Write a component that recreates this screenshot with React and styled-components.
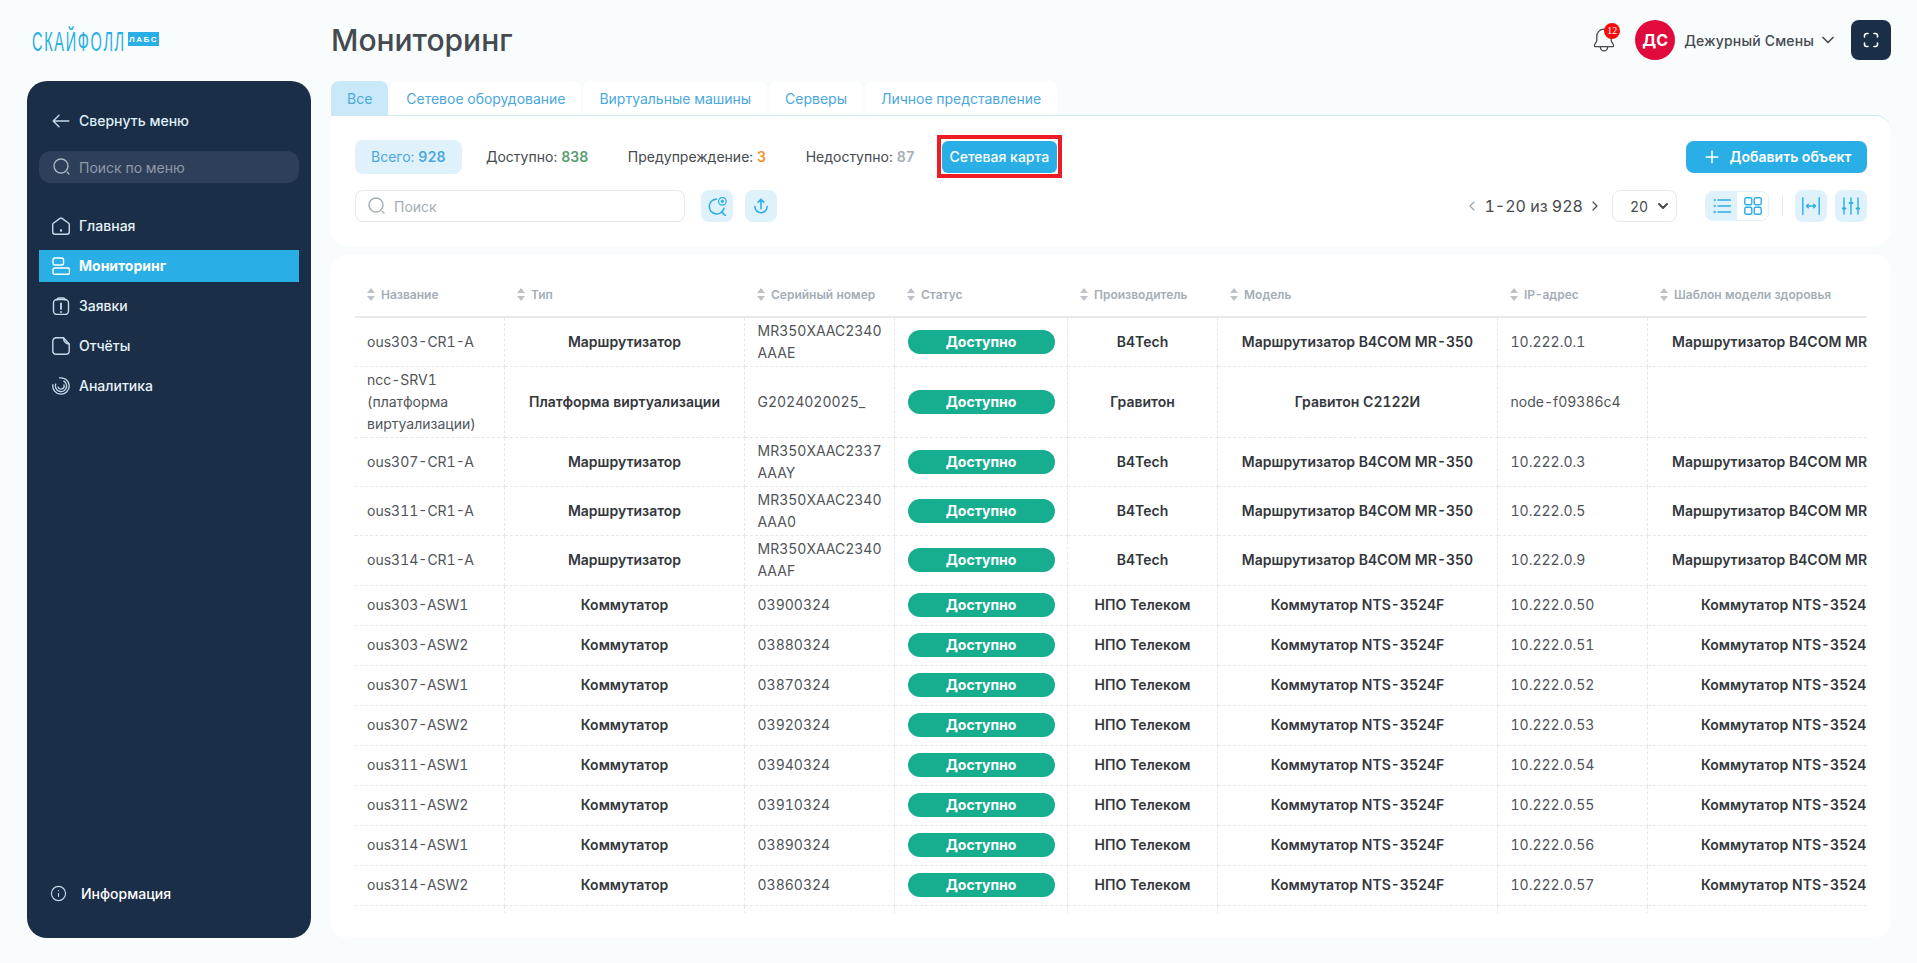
import React from "react";
import styled, { createGlobalStyle } from "styled-components";
import { Info, Plus, ChevronDown, ChevronLeft, ChevronRight } from "lucide-react";

const GlobalStyle = createGlobalStyle`
  html, body { margin: 0; padding: 0; background: #f8fcfd; }
  * { box-sizing: border-box; }
  body {
    font-family: Inter, "Noto Sans", sans-serif;
    font-feature-settings: "tnum";
    overflow: hidden;
  }
`;

const Page = styled.div`
  width: 1917px;
  height: 963px;
  display: grid;
  grid-template-columns: 284px 1560px;
  column-gap: 20px;
  padding: 0 26px 25px 27px;
`;
const Side = styled.div`
  display: flex;
  flex-direction: column;
`;
const LogoRow = styled.div`
  height: 81px;
  padding: 32px 0 0 5px;
  display: flex;
  align-items: flex-start;
  gap: 2px;
`;
const LogoText = styled.span`
  font-family: "Liberation Sans", sans-serif;
  font-size: 28px;
  line-height: 20px;
  color: #29aee6;
  letter-spacing: 3.2px;
  display: inline-block;
  transform: scaleX(0.52);
  transform-origin: left top;
  width: 94px;
  white-space: nowrap;
`;
const LogoBadge = styled.span`
  background: #29aee6;
  color: #fff;
  font-family: "Liberation Sans", sans-serif;
  font-size: 8px;
  font-weight: 700;
  letter-spacing: 1.5px;
  height: 14px;
  width: 31px;
  display: flex;
  align-items: center;
  justify-content: center;
`;
const Sidebar = styled.nav`
  height: 857px;
  background: #1b2e47;
  border-radius: 20px;
  padding: 24px 12px 0;
  display: flex;
  flex-direction: column;
`;
const Collapse = styled.div`
  height: 32px;
  padding: 0 0 1px 13px;
  display: flex;
  align-items: center;
  gap: 9px;
  color: #dfeef7;
  font-size: 14px;
  font-weight: 500;
  svg { color: #c4dcea; }
`;
const MenuSearch = styled.div`
  margin-top: 14px;
  height: 32px;
  background: #2e4059;
  border-radius: 12px;
  padding-left: 14px;
  display: flex;
  align-items: center;
  gap: 8px;
  color: #8e9aa8;
  font-size: 14px;
  svg { color: #a9b5c2; }
`;
const MenuList = styled.div`
  margin-top: 27px;
  display: flex;
  flex-direction: column;
  gap: 8px;
`;
const MenuItem = styled.div`
  height: 32px;
  padding: 0 0 1px 13px;
  display: flex;
  align-items: center;
  gap: 9px;
  font-size: 14px;
  font-weight: ${(p) => (p.$active ? 700 : 500)};
  color: ${(p) => (p.$active ? "#fff" : "#e6f2f9")};
  background: ${(p) => (p.$active ? "#29aee6" : "transparent")};
  svg { color: ${(p) => (p.$active ? "#fff" : "#c4dcea")}; flex: none; }
`;
const InfoRow = styled.div`
  margin-top: auto;
  margin-bottom: 33px;
  height: 24px;
  padding-left: 11px;
  display: flex;
  align-items: center;
  gap: 14px;
  color: #fff;
  font-size: 14px;
  font-weight: 500;
  svg { color: #c4dcea; }
`;

const Main = styled.div`
  display: flex;
  flex-direction: column;
  min-width: 0;
`;
const TopBar = styled.header`
  height: 81px;
  padding-top: 20px;
  display: flex;
  align-items: flex-start;
  justify-content: space-between;
`;
const Title = styled.h1`
  margin: 0;
  font-size: 30px;
  line-height: 40px;
  font-weight: 500;
  color: #454a50;
`;
const UserBox = styled.div`
  display: flex;
  align-items: center;
`;
const BellWrap = styled.div`
  position: relative;
  width: 24px;
  height: 24px;
  margin-right: 19px;
  color: #454a50;
`;
const Badge = styled.span`
  position: absolute;
  top: -5px;
  right: -4px;
  width: 16px;
  height: 16px;
  border-radius: 50%;
  background: #f50d0d;
  color: #fff;
  font-family: "Liberation Serif", serif;
  font-size: 10px;
  line-height: 16px;
  text-align: center;
`;
const Avatar = styled.div`
  width: 40px;
  height: 40px;
  border-radius: 50%;
  background: #e00a3c;
  color: #fff;
  font-size: 16px;
  font-weight: 700;
  display: flex;
  align-items: center;
  justify-content: center;
`;
const UserName = styled.span`
  margin-left: 9px;
  font-size: 14px;
  font-weight: 500;
  letter-spacing: 0.15px;
  color: #454a50;
`;
const Chevron = styled.span`
  margin: 0 13px 0 4px;
  display: flex;
  color: #454a50;
`;
const FullBtn = styled.button`
  width: 40px;
  height: 40px;
  border: none;
  border-radius: 8px;
  background: #1b2e47;
  color: #fff;
  display: flex;
  align-items: center;
  justify-content: center;
  padding: 0;
`;

const Tabs = styled.div`
  height: 34px;
  display: flex;
  gap: 2px;
`;
const Tab = styled.div`
  padding: 0 16px;
  display: flex;
  align-items: center;
  font-size: 14px;
  letter-spacing: -0.01px;
  color: #4aa8dc;
  background: ${(p) => (p.$active ? "#c9e9f9" : "#fff")};
  border-radius: 8px 8px 0 0;
`;
const FilterPanel = styled.section`
  height: 131px;
  background: #fff;
  border-top: 1px solid #cde8f6;
  border-radius: 0 16px 16px 16px;
  padding: 24px 24px 0;
  display: flex;
  flex-direction: column;
  gap: 16px;
`;
const PanelRow = styled.div`
  display: flex;
  align-items: center;
  justify-content: space-between;
`;
const Group = styled.div`
  display: flex;
  align-items: center;
`;
const Stat = styled.div`
  height: 34px;
  padding: 0 15.5px 1px 24px;
  display: flex;
  align-items: center;
  gap: 4px;
  font-size: 14px;
  color: #454a50;
`;
const ActiveStat = styled(Stat)`
  width: 107px;
  padding: 0 0 1px 16px;
  border-radius: 8px;
  color: #4aa8dc;
  background: #dff1fa;
`;
const StatValue = styled.b`
  font-weight: 600;
  color: ${(p) => p.$color};
`;
const MapButton = styled.button`
  position: relative;
  height: 32px;
  width: 115px;
  margin-left: 11.5px;
  border: none;
  border-radius: 6px;
  background: #29aee6;
  color: #fff;
  font: 500 14px Inter, sans-serif;
  padding: 0 0 1px;
  &::after {
    content: "";
    position: absolute;
    inset: -6px -5px -5px;
    border: 4px solid #ed1c24;
  }
`;
const AddButton = styled.button`
  height: 32px;
  width: 181px;
  border: none;
  border-radius: 8px;
  background: #29aee6;
  color: #fff;
  font: 600 14px Inter, sans-serif;
  display: flex;
  align-items: center;
  justify-content: center;
  gap: 8px;
  padding: 0 0 1px;
`;
const SearchField = styled.div`
  width: 330px;
  height: 32px;
  border: 1px solid #e3e8ec;
  border-radius: 8px;
  padding-left: 12px;
  display: flex;
  align-items: center;
  gap: 8px;
  font-size: 14px;
  color: #a5adb5;
`;
const IconBtn = styled.div`
  width: 32px;
  height: 32px;
  border-radius: 8px;
  background: #dff1fa;
  color: #29aee6;
  display: flex;
  align-items: center;
  justify-content: center;
  margin-left: ${(p) => p.$gap}px;
`;
const Pager = styled.div`
  display: flex;
  align-items: center;
  gap: 4px;
  font-size: 16px;
  color: #454a50;
`;
const PageSelect = styled.div`
  width: 65px;
  height: 32px;
  margin-left: 9px;
  border: 1px solid #e6e9ec;
  border-radius: 8px;
  padding: 0 5px 0 17px;
  display: flex;
  align-items: center;
  justify-content: space-between;
  font-size: 14px;
  color: #454a50;
`;
const Toggle = styled.div`
  display: flex;
  width: 64px;
  height: 30px;
  margin-left: 28px;
  border: 1px solid #dff1fa;
  border-radius: 8px;
  overflow: hidden;
`;
const ToggleCell = styled.div`
  flex: 1;
  display: flex;
  align-items: center;
  justify-content: center;
  color: #29aee6;
  background: ${(p) => (p.$active ? "#dff1fa" : "#fff")};
`;
const Divider = styled.div`
  width: 1px;
  height: 20px;
  margin-left: 13px;
  background: #e3e8ec;
`;

const TablePanel = styled.section`
  margin-top: 9px;
  height: 683px;
  background: #fff;
  border-radius: 16px;
  padding: 15px 24px 25px;
`;
const TableClip = styled.div`
  height: 643px;
  overflow: hidden;
`;
const Table = styled.table`
  width: 1572px;
  table-layout: fixed;
  border-collapse: collapse;
`;
const Th = styled.th`
  height: 47px;
  padding: 2px 0 0 13px;
  border-bottom: 2px solid #e8eaed;
  text-align: left;
  font-size: 12px;
  font-weight: 600;
  color: #a5adb5;
  white-space: nowrap;
  &:first-child { padding-left: 12px; }
`;
const ThInner = styled.div`
  display: flex;
  align-items: center;
  gap: 6px;
`;
const Td = styled.td`
  height: ${(p) => p.$h}px;
  padding: 0 ${(p) => (p.$brk ? 6 : 12)}px 0 13px;
  border-right: 1px dashed #e5e7e9;
  border-bottom: 1px dashed #e5e7e9;
  font-size: 14px;
  line-height: 22px;
  font-weight: ${(p) => (p.$bold ? 600 : 400)};
  color: ${(p) => (p.$bold ? "#33373c" : "#4f5459")};
  text-align: ${(p) => (p.$bold ? "center" : "left")};
  overflow: hidden;
  white-space: ${(p) => (p.$bold ? "nowrap" : "normal")};
  word-break: ${(p) => (p.$brk ? "break-all" : "normal")};
  &:first-child { padding-left: 12px; }
  &:last-child { border-right: none; }
`;
const Pill = styled.div`
  height: 24px;
  border-radius: 12px;
  background: #17ad8f;
  color: #fff;
  font-size: 14px;
  font-weight: 700;
  line-height: 24px;
  text-align: center;
`;

const Ico = ({ size = 18, children, sw = 1.4 }) => (
  <svg width={size} height={size} viewBox="0 0 18 18" fill="none" stroke="currentColor" strokeWidth={sw} strokeLinecap="round" strokeLinejoin="round">
    {children}
  </svg>
);
const BackIcon = () => (
  <Ico><path d="M1.2 9h15.6M7 3.2 1.2 9 7 14.8" /></Ico>
);
const SearchIcon = () => (
  <Ico><circle cx="8" cy="8" r="7" /><path d="m14.3 14.3 1.7 1.700" /></Ico>
);
const HomeIcon = () => (
  <Ico>
    <path d="M8 1.4 1.3 6.2c-.4.3-.6.7-.6 1.2v7.3c0 1.4 1.1 2.500 2.500 2.500h11.600c1.400 0 2.500-1.100 2.500-2.500V7.400c0-.5-.2-.9-.6-1.200L10 1.400c-.6-.4-1.400-.4-2 0Z" />
    <path d="M9 12.8v1.2" strokeWidth="1.8" />
  </Ico>
);
const MonitorIcon = () => (
  <Ico>
    <rect x="1" y="1" width="10.5" height="7" rx="1.8" />
    <rect x="1" y="11" width="16.5" height="6.3" rx="1.8" />
  </Ico>
);
const TicketIcon = () => (
  <Ico>
    <rect x="1.5" y="2.5" width="15" height="15" rx="3.5" />
    <path d="M5 3c0-1.200 1-2 2-2h4c1 0 2 .8 2 2" />
    <path d="M9 6.500v5.500M9 14.800v.2" strokeWidth="1.8" />
  </Ico>
);
const ReportIcon = () => (
  <Ico>
    <path d="M11.500 .8H4.300C2.300.8.800 2.300.800 4.300v9.400c0 2 1.500 3.500 3.500 3.500h9.400c2 0 3.500-1.500 3.500-3.500V7C14 7 11.500 4.500 11.500.8Z" />
    <path d="M11.500.8 17.200 7" />
  </Ico>
);
const AnalyticsIcon = () => (
  <Ico sw={1.3}>
    <path d="M7.58 .92A8.2 8.2 0 1 1 .92 7.58" />
    <path d="M11.8 4.15A5.6 5.6 0 1 1 3.74 7.08" />
    <path d="M12 7.91A3.2 3.2 0 0 1 5.99 10.09" />
  </Ico>
);
const BellIcon = () => (
  <svg width="24" height="24" viewBox="2 2.5 20 20" fill="none" stroke="currentColor" strokeWidth="1.1" strokeLinecap="round" strokeLinejoin="round">
    <path d="M12 3.500c-3.600 0-6 2.800-6 6v3.500c0 1.300-2 3-2 4.200 0 .5.300.8.800.8h14.400c.5 0 .8-.3.800-.8 0-1.200-2-2.900-2-4.200V9.500c0-3.200-2.400-6-6-6Z" />
    <path d="M9 18v.5a3 3 0 0 0 6 0V18" />
  </svg>
);
const FrameIcon = () => (
  <Ico>
    <path d="M6 2.500H4.500a2 2 0 0 0-2 2V6M12 2.500h1.500a2 2 0 0 1 2 2V6M6 15.500H4.500a2 2 0 0 1-2-2V12M12 15.500h1.500a2 2 0 0 0 2-2V12" strokeWidth="1.6" />
  </Ico>
);
const MapSearchIcon = () => (
  <Ico size={20}>
    <path d="M8.400 2.800a6.700 6.700 0 1 0 6.900 8.200" />
    <path d="m13.500 14.500 3 3" />
    <circle cx="13.8" cy="4.8" r="3.4" strokeWidth="1.1" />
    <circle cx="13.8" cy="4.8" r="1.4" fill="currentColor" stroke="none" />
  </Ico>
);
const UploadIcon = () => (
  <Ico size={20}>
    <path d="M9 11.500V3.200M6.500 5.500 9 3l2.500 2.500" />
    <path d="M3.500 9.500a5.500 5.500 0 0 0 11 0" />
  </Ico>
);
const ListIcon = () => (
  <Ico sw={0.8}>
    <circle cx="1.6" cy="3" r=".8" />
    <circle cx="1.6" cy="9" r=".8" />
    <circle cx="1.6" cy="15" r=".8" />
    <path d="M5 3h12.500M5 9h12.500M5 15h12.500" strokeWidth="1.5" />
  </Ico>
);
const GridIcon = () => (
  <Ico>
    <rect x=".8" y=".8" width="7" height="7" rx="1.5" />
    <rect x="10.2" y=".8" width="7" height="7" rx="1.5" />
    <rect x=".8" y="10.2" width="7" height="7" rx="1.5" />
    <rect x="10.2" y="10.2" width="7" height="7" rx="1.5" />
  </Ico>
);
const WidthIcon = () => (
  <Ico>
    <path d="M.8.800v16.400M17.200.800v16.400M4.500 9h9M6.300 7.200 4.500 9l1.800 1.800M11.700 7.200 13.500 9l-1.800 1.800" />
  </Ico>
);
const SlidersIcon = () => (
  <Ico>
    <path d="M2 1v16M9 1v16M16 1v16" />
    <path d="M.5 11.500h3M7.500 6h3M14.500 11.500h3" strokeWidth="1.8" />
  </Ico>
);
const SortIcon = () => (
  <svg width="8" height="13" viewBox="0 0 8 13" fill="#bcc2c8">
    <path d="M4 0 8 5H0ZM4 13 0 8h8Z" />
  </svg>
);

const columns = [
  { name: "Название", w: 149 },
  { name: "Тип", w: 240 },
  { name: "Серийный номер", w: 150 },
  { name: "Статус", w: 173 },
  { name: "Производитель", w: 150 },
  { name: "Модель", w: 280 },
  { name: "IP-адрес", w: 150 },
  { name: "Шаблон модели здоровья", w: 280 },
];

const ROUTER = "Маршрутизатор";
const R_MODEL = "Маршрутизатор B4COM MR-350";
const SWITCH = "Коммутатор";
const S_MODEL = "Коммутатор NTS-3524F";

const rows = [
  { h: 49, name: "ous303-CR1-A", type: ROUTER, sn: "MR350XAAC2340AAAE", vendor: "B4Tech", model: R_MODEL, ip: "10.222.0.1", tpl: R_MODEL },
  { h: 71, name: "ncc-SRV1 (платформа виртуализации)", type: "Платформа виртуализации", sn: "G2024020025_", vendor: "Гравитон", model: "Гравитон С2122И", ip: "node-f09386c4", tpl: "" },
  { h: 49, name: "ous307-CR1-A", type: ROUTER, sn: "MR350XAAC2337AAAY", vendor: "B4Tech", model: R_MODEL, ip: "10.222.0.3", tpl: R_MODEL },
  { h: 49, name: "ous311-CR1-A", type: ROUTER, sn: "MR350XAAC2340AAA0", vendor: "B4Tech", model: R_MODEL, ip: "10.222.0.5", tpl: R_MODEL },
  { h: 50, name: "ous314-CR1-A", type: ROUTER, sn: "MR350XAAC2340AAAF", vendor: "B4Tech", model: R_MODEL, ip: "10.222.0.9", tpl: R_MODEL },
  { h: 40, name: "ous303-ASW1", type: SWITCH, sn: "03900324", vendor: "НПО Телеком", model: S_MODEL, ip: "10.222.0.50", tpl: S_MODEL },
  { h: 40, name: "ous303-ASW2", type: SWITCH, sn: "03880324", vendor: "НПО Телеком", model: S_MODEL, ip: "10.222.0.51", tpl: S_MODEL },
  { h: 40, name: "ous307-ASW1", type: SWITCH, sn: "03870324", vendor: "НПО Телеком", model: S_MODEL, ip: "10.222.0.52", tpl: S_MODEL },
  { h: 40, name: "ous307-ASW2", type: SWITCH, sn: "03920324", vendor: "НПО Телеком", model: S_MODEL, ip: "10.222.0.53", tpl: S_MODEL },
  { h: 40, name: "ous311-ASW1", type: SWITCH, sn: "03940324", vendor: "НПО Телеком", model: S_MODEL, ip: "10.222.0.54", tpl: S_MODEL },
  { h: 40, name: "ous311-ASW2", type: SWITCH, sn: "03910324", vendor: "НПО Телеком", model: S_MODEL, ip: "10.222.0.55", tpl: S_MODEL },
  { h: 40, name: "ous314-ASW1", type: SWITCH, sn: "03890324", vendor: "НПО Телеком", model: S_MODEL, ip: "10.222.0.56", tpl: S_MODEL },
  { h: 40, name: "ous314-ASW2", type: SWITCH, sn: "03860324", vendor: "НПО Телеком", model: S_MODEL, ip: "10.222.0.57", tpl: S_MODEL },
  { h: 40, name: "", type: "", sn: "", vendor: "", model: "", ip: "", tpl: "" },
];

export default function App() {
  return (
    <Page>
      <GlobalStyle />
      <Side>
        <LogoRow>
          <LogoText>СКАЙФОЛЛ</LogoText>
          <LogoBadge>ЛАБС</LogoBadge>
        </LogoRow>
        <Sidebar>
          <Collapse><BackIcon />Свернуть меню</Collapse>
          <MenuSearch><SearchIcon />Поиск по меню</MenuSearch>
          <MenuList>
            <MenuItem><HomeIcon />Главная</MenuItem>
            <MenuItem $active><MonitorIcon />Мониторинг</MenuItem>
            <MenuItem><TicketIcon />Заявки</MenuItem>
            <MenuItem><ReportIcon />Отчёты</MenuItem>
            <MenuItem><AnalyticsIcon />Аналитика</MenuItem>
          </MenuList>
          <InfoRow><Info size={17} strokeWidth={1.6} />Информация</InfoRow>
        </Sidebar>
      </Side>
      <Main>
        <TopBar>
          <Title>Мониторинг</Title>
          <UserBox>
            <BellWrap><BellIcon /><Badge>12</Badge></BellWrap>
            <Avatar>ДС</Avatar>
            <UserName>Дежурный Смены</UserName>
            <Chevron><ChevronDown size={20} strokeWidth={2} /></Chevron>
            <FullBtn><FrameIcon /></FullBtn>
          </UserBox>
        </TopBar>
        <Tabs>
          <Tab $active>Все</Tab>
          <Tab>Сетевое оборудование</Tab>
          <Tab>Виртуальные машины</Tab>
          <Tab>Серверы</Tab>
          <Tab>Личное представление</Tab>
        </Tabs>
        <FilterPanel>
          <PanelRow>
            <Group>
              <ActiveStat>Всего: <StatValue $color="#4aa8dc">928</StatValue></ActiveStat>
              <Stat>Доступно: <StatValue $color="#5a9e6f">838</StatValue></Stat>
              <Stat>Предупреждение: <StatValue $color="#f59331">3</StatValue></Stat>
              <Stat>Недоступно: <StatValue $color="#a5adb5">87</StatValue></Stat>
              <MapButton>Сетевая карта</MapButton>
            </Group>
            <AddButton><Plus size={20} strokeWidth={1.8} />Добавить объект</AddButton>
          </PanelRow>
          <PanelRow>
            <Group>
              <SearchField><SearchIcon />Поиск</SearchField>
              <IconBtn $gap={16}><MapSearchIcon /></IconBtn>
              <IconBtn $gap={12}><UploadIcon /></IconBtn>
            </Group>
            <Group>
              <Pager>
                <ChevronLeft size={16} strokeWidth={1.6} color="#9aa0a6" />
                1-20 из 928
                <ChevronRight size={16} strokeWidth={1.8} />
              </Pager>
              <PageSelect>20<ChevronDown size={16} strokeWidth={3} /></PageSelect>
              <Toggle>
                <ToggleCell $active><ListIcon /></ToggleCell>
                <ToggleCell><GridIcon /></ToggleCell>
              </Toggle>
              <Divider />
              <IconBtn $gap={12}><WidthIcon /></IconBtn>
              <IconBtn $gap={8}><SlidersIcon /></IconBtn>
            </Group>
          </PanelRow>
        </FilterPanel>
        <TablePanel>
          <TableClip>
            <Table>
              <colgroup>
                {columns.map((c) => <col key={c.name} width={c.w} />)}
              </colgroup>
              <thead>
                <tr>
                  {columns.map((c) => (
                    <Th key={c.name}><ThInner><SortIcon />{c.name}</ThInner></Th>
                  ))}
                </tr>
              </thead>
              <tbody>
                {rows.map((r, i) => (
                  <tr key={i}>
                    <Td $h={r.h}>{r.name}</Td>
                    <Td $h={r.h} $bold>{r.type}</Td>
                    <Td $h={r.h} $brk>{r.sn}</Td>
                    <Td $h={r.h}><Pill>Доступно</Pill></Td>
                    <Td $h={r.h} $bold>{r.vendor}</Td>
                    <Td $h={r.h} $bold>{r.model}</Td>
                    <Td $h={r.h}>{r.ip}</Td>
                    <Td $h={r.h} $bold>{r.tpl}</Td>
                  </tr>
                ))}
              </tbody>
            </Table>
          </TableClip>
        </TablePanel>
      </Main>
    </Page>
  );
}
